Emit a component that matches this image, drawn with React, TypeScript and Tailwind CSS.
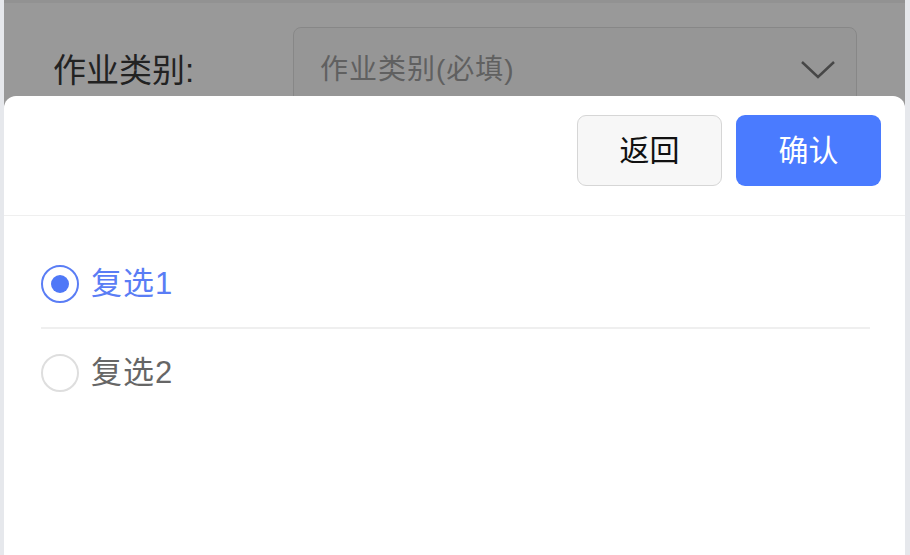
import React, { useState } from 'react';

const options = ['复选1', '复选2'];

const Radio = ({ checked }: { checked: boolean }) => {
    return (
        <span
            className={
                checked
                    ? 'flex h-[38px] w-[38px] shrink-0 items-center justify-center rounded-full border-2 border-[#5a7df5]'
                    : 'flex h-[38px] w-[38px] shrink-0 items-center justify-center rounded-full border-2 border-[#dedede]'
            }
        >
            {checked && <span className="h-[18px] w-[18px] rounded-full bg-[#4f78f7]" />}
        </span>
    );
};

const App = () => {
    const [selected, setSelected] = useState(0);

    return (
        <div
            className="flex h-[555px] w-[910px] overflow-hidden bg-[#e6e8ec]"
            style={{ fontFamily: '"Liberation Sans", "Noto Sans CJK SC", sans-serif' }}
        >
            <div className="relative ml-[4px] mr-[5px] flex-1 overflow-hidden bg-white">
                {/* page behind the sheet */}
                <div className="border-t-[3px] border-[#f4f4f4] pt-[24px]">
                    <div className="flex items-center pl-[49px] pr-[48px]">
                        <span className="w-[240px] text-[33px] leading-none text-[#3a3a3a]">作业类别:</span>
                        <div className="flex h-[86px] flex-1 items-center justify-between rounded-[8px] border border-[#e2e2e2] bg-[#fbfbfb] pl-[26px] pr-[20px]">
                            <span className="text-[28px] tracking-[1px] text-[#a0a0a0]">作业类别(必填)</span>
                            <svg width="36" height="22" viewBox="0 0 36 22" fill="none">
                                <path d="M2 3 L18 18 L34 3" stroke="#777" strokeWidth="2.5" />
                            </svg>
                        </div>
                    </div>
                </div>

                {/* mask */}
                <div className="absolute inset-0 bg-black/40" />

                {/* bottom sheet */}
                <div className="absolute inset-x-0 bottom-0 top-[96px] rounded-t-[12px] bg-white">
                    <div className="flex h-[120px] items-start justify-end gap-[14px] border-b border-[#efefef] pr-[24px] pt-[19px]">
                        <button className="h-[71px] w-[145px] rounded-[9px] border border-[#d6d6d6] bg-[#f7f7f7] text-[30px] text-[#111]">
                            返回
                        </button>
                        <button className="h-[71px] w-[145px] rounded-[9px] bg-[#4a7bff] text-[30px] text-white">
                            确认
                        </button>
                    </div>
                    <div className="pl-[37px] pr-[35px] pt-[25px]">
                        {options.map((opt, i) => (
                            <div
                                key={opt}
                                onClick={() => setSelected(i)}
                                className={
                                    i === 0
                                        ? 'flex h-[88px] items-center gap-[12px] border-b-2 border-[#efefef]'
                                        : 'flex h-[88px] items-center gap-[12px]'
                                }
                            >
                                <Radio checked={selected === i} />
                                <span
                                    className={
                                        selected === i
                                            ? 'text-[31px] tracking-[1px] text-[#5a7df5]'
                                            : 'text-[31px] tracking-[1px] text-[#666]'
                                    }
                                >
                                    {opt}
                                </span>
                            </div>
                        ))}
                    </div>
                </div>
            </div>
        </div>
    );
};

export default App;
